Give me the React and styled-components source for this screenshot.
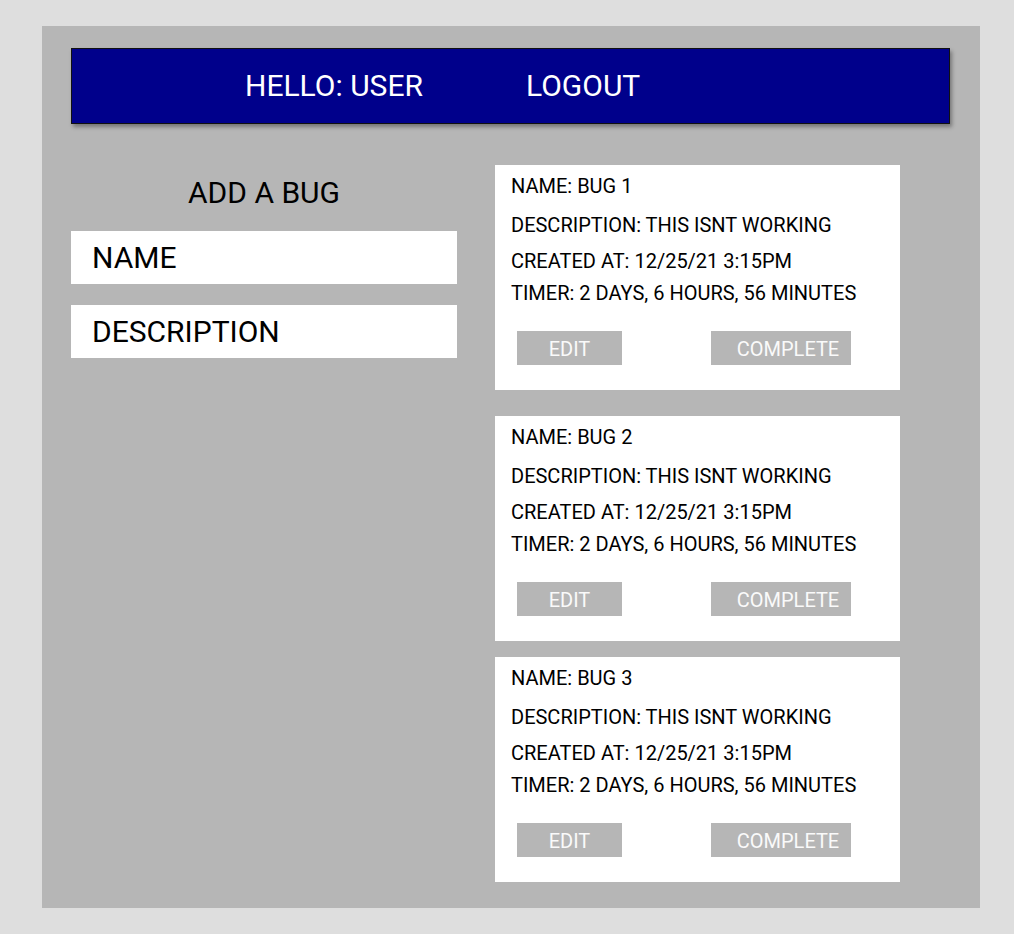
import React from 'react'
import styled, { createGlobalStyle } from 'styled-components'

const GlobalStyle = createGlobalStyle`
  body {
    margin: 0;
    background: #dedede;
    font-family: Roboto, "Liberation Sans", sans-serif;
  }
`

const Panel = styled.div`
  width: 938px;
  margin: 26px 0 0 42px;
  padding: 22px 30px 26px 29px;
  box-sizing: border-box;
  background: #b6b6b6;
`

const Header = styled.header`
  height: 76px;
  display: flex;
  align-items: center;
  gap: 103px;
  padding-left: 173px;
  background: #00008b;
  border: 1px solid #111;
  box-sizing: border-box;
  box-shadow: 2px 3px 4px rgba(0, 0, 0, 0.35);
`

const HeaderItem = styled.span`
  color: #fff;
  font-size: 30px;
  line-height: 34px;
`

const Main = styled.div`
  display: flex;
  gap: 38px;
  margin-top: 41px;
`

const Form = styled.div`
  width: 386px;
  padding-top: 11px;
  display: flex;
  flex-direction: column;
`

const Title = styled.h2`
  margin: 0 0 21px;
  text-align: center;
  font-size: 30px;
  font-weight: 400;
  line-height: 34px;
  color: #000;
`

const Field = styled.div`
  height: 53px;
  display: flex;
  align-items: center;
  padding-left: 21px;
  margin-bottom: ${p => p.$last ? 0 : '21px'};
  background: #fff;
  font-size: 30px;
  color: #000;
`

const List = styled.div`
  display: flex;
  flex-direction: column;
`

const Card = styled.div`
  width: 405px;
  height: 225px;
  box-sizing: border-box;
  margin-top: ${p => p.$gap}px;
  padding: 10px 16px 0;
  background: #fff;
`

const Line = styled.div`
  margin-top: ${p => p.$gap}px;
  font-size: 20px;
  line-height: 22px;
  color: #000;
  white-space: nowrap;
`

const Buttons = styled.div`
  display: flex;
  gap: 89px;
  margin-top: 27px;
  padding-left: 6px;
`

const Button = styled.button`
  width: ${p => p.$w}px;
  height: 34px;
  padding: 2px 0 0 ${p => p.$indent || 0}px;
  border: none;
  background: #b6b6b6;
  color: #fafafa;
  font-family: inherit;
  font-size: 20px;
`

const bugs = [
  { name: 'BUG 1', gap: 0 },
  { name: 'BUG 2', gap: 26 },
  { name: 'BUG 3', gap: 16 },
]

export default function App() {
  return (
    <>
      <GlobalStyle />
      <Panel>
        <Header>
          <HeaderItem>HELLO: USER</HeaderItem>
          <HeaderItem>LOGOUT</HeaderItem>
        </Header>
        <Main>
          <Form>
            <Title>ADD A BUG</Title>
            <Field>NAME</Field>
            <Field $last>DESCRIPTION</Field>
          </Form>
          <List>
            {bugs.map(b => (
              <Card key={b.name} $gap={b.gap}>
                <Line $gap={0}>NAME: {b.name}</Line>
                <Line $gap={17}>DESCRIPTION: THIS ISNT WORKING</Line>
                <Line $gap={14}>CREATED AT: 12/25/21 3:15PM</Line>
                <Line $gap={10}>TIMER: 2 DAYS, 6 HOURS, 56 MINUTES</Line>
                <Buttons>
                  <Button $w={105}>EDIT</Button>
                  <Button $w={140} $indent={14}>COMPLETE</Button>
                </Buttons>
              </Card>
            ))}
          </List>
        </Main>
      </Panel>
    </>
  )
}
